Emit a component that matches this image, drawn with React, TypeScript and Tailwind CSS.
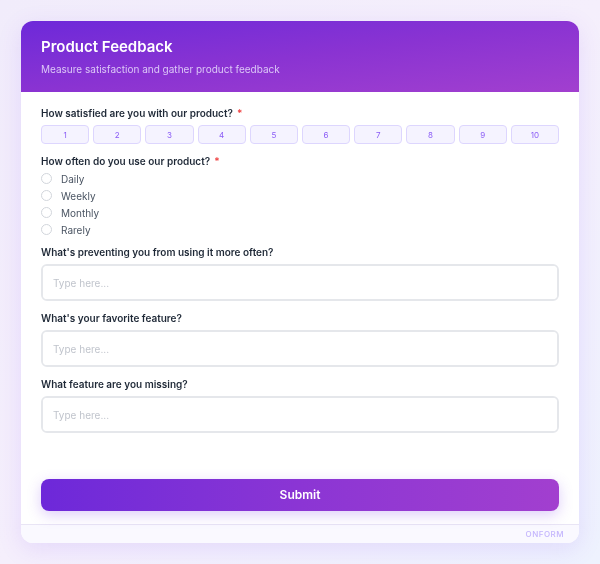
import React, { useState } from 'react';

const ratings = [1, 2, 3, 4, 5, 6, 7, 8, 9, 10];
const frequencies = ['Daily', 'Weekly', 'Monthly', 'Rarely'];

function Label({ children, required }: { children: React.ReactNode; required?: boolean }) {
  return (
    <label className="block text-[10px] leading-4 font-semibold text-[#1f2937]">
      {children}
      {required && <span className="text-[#ef4444] ml-1">*</span>}
    </label>
  );
}

function TextBox({ value, onChange }: { value: string; onChange: (v: string) => void }) {
  return (
    <textarea
      value={value}
      onChange={(e) => onChange(e.target.value)}
      placeholder="Type here..."
      className="mt-1 block w-full h-[37px] resize-none rounded-md border-2 border-[#e5e7eb] bg-white px-[10px] py-[9px] text-[10px] leading-4 text-[#1f2937] placeholder-[#c0c4cc] focus:outline-none"
    />
  );
}

export default function App() {
  const [rating, setRating] = useState<number | null>(null);
  const [freq, setFreq] = useState('');
  const [blocker, setBlocker] = useState('');
  const [favorite, setFavorite] = useState('');
  const [missing, setMissing] = useState('');

  return (
    <div
      className="min-h-[564px] w-full bg-gradient-to-br from-[#f1ecfb] via-[#f5effc] to-[#eef2fe] p-[21px]"
      style={{ fontFamily: 'Inter, "Noto Sans", sans-serif' }}
    >
      <form
        onSubmit={(e) => e.preventDefault()}
        className="w-[558px] overflow-hidden rounded-xl bg-white shadow-[0_6px_24px_rgba(124,58,237,0.13)]"
      >
        <div className="bg-gradient-to-br from-[#6d28d9] via-[#8a33d2] to-[#a23fcf] px-5 pt-[16px] pb-[16px]">
          <h1 className="text-[15px] leading-5 font-semibold text-white">Product Feedback</h1>
          <p className="mt-[5px] text-[10px] leading-[14px] text-[#dcc8f7]">
            Measure satisfaction and gather product feedback
          </p>
        </div>

        <div className="px-5 pt-[13px] pb-[13px]">
          <Label required>How satisfied are you with our product?</Label>
          <div className="mt-1 grid grid-cols-10 gap-[4px]">
            {ratings.map((n) => (
              <button
                key={n}
                type="button"
                onClick={() => setRating(n)}
                className={
                  rating === n
                    ? 'h-[19px] rounded-[4px] border border-[#7c3aed] bg-[#7c3aed] text-[8px] text-white'
                    : 'h-[19px] rounded-[4px] border border-[#ddd6fe] bg-[#f5f3ff] text-[8px] text-[#8b5cf6]'
                }
              >
                {n}
              </button>
            ))}
          </div>

          <div className="mt-[9px]">
            <Label required>How often do you use our product?</Label>
            <div className="mt-[1px] flex flex-col">
              {frequencies.map((f) => (
                <label key={f} className="flex h-[17px] items-center gap-[9px] cursor-pointer">
                  <input
                    type="radio"
                    name="freq"
                    checked={freq === f}
                    onChange={() => setFreq(f)}
                    className="peer sr-only"
                  />
                  <span className="h-[11px] w-[11px] rounded-full border border-[#d1d5db] bg-white peer-checked:border-[3px] peer-checked:border-[#7c3aed]" />
                  <span className="text-[10px] leading-4 text-[#4b5563]">{f}</span>
                </label>
              ))}
            </div>
          </div>

          <div className="mt-[6px]">
            <Label>What's preventing you from using it more often?</Label>
            <TextBox value={blocker} onChange={setBlocker} />
          </div>

          <div className="mt-[9px]">
            <Label>What's your favorite feature?</Label>
            <TextBox value={favorite} onChange={setFavorite} />
          </div>

          <div className="mt-[9px]">
            <Label>What feature are you missing?</Label>
            <TextBox value={missing} onChange={setMissing} />
          </div>

          <button
            type="submit"
            className="mt-[46px] h-[32px] w-full rounded-lg bg-gradient-to-r from-[#6d28d9] via-[#8b35d4] to-[#a23fcf] text-[12px] font-semibold text-white shadow-[0_4px_14px_rgba(124,58,237,0.25)]"
          >
            Submit
          </button>
        </div>

        <div className="flex h-[19px] items-center justify-end border-t border-[#e9e5f5] bg-[#faf9ff] pr-[15px]">
          <span className="text-[8px] font-medium tracking-[0.06em] text-[#c4b5fd]">ONFORM</span>
        </div>
      </form>
    </div>
  );
}
